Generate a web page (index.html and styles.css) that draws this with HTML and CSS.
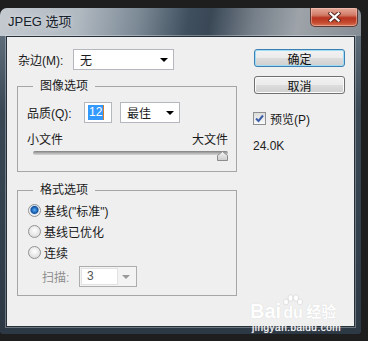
FILE: index.html
```html
<!DOCTYPE html>
<html lang="zh-CN">
<head>
    <meta charset="UTF-8">
    <title>JPEG 选项</title>
<link rel="stylesheet" href="styles.css">
</head>
<body>

    <div class="window">
        <div class="titlebar">
            <span class="title">JPEG 选项</span>
            <button class="close-btn" aria-label="关闭">
                <svg width="13" height="10" viewBox="0 0 13 10">
                    <path d="M2.5 1.5 L10.5 8.5 M10.5 1.5 L2.5 8.5" stroke="#5b2b22" stroke-width="4.2" stroke-linecap="square"/>
                    <path d="M2.5 1.5 L10.5 8.5 M10.5 1.5 L2.5 8.5" stroke="#ffffff" stroke-width="2.2" stroke-linecap="square"/>
                </svg>
            </button>
        </div>

        <div class="frame-body">
            <div class="client">

                <div class="left-col">
                    <div class="matte-row">
                        <label class="matte-label">杂边(M):</label>
                        <div class="select select-matte"><span>无</span><i class="arrow"></i></div>
                    </div>

                    <fieldset class="group group-image">
                        <legend>图像选项</legend>
                        <div class="quality-row">
                            <label class="quality-label">品质(Q):</label>
                            <div class="num-input"><span class="selected">12</span></div>
                            <div class="select select-quality"><span>最佳</span><i class="arrow"></i></div>
                        </div>
                        <div class="size-labels">
                            <span>小文件</span>
                            <span>大文件</span>
                        </div>
                        <div class="slider">
                            <div class="track"></div>
                            <svg class="thumb" width="11" height="10" viewBox="0 0 11 10">
                                <defs>
                                    <linearGradient id="thumbFill" x1="0" y1="0" x2="0" y2="1">
                                        <stop offset="0" stop-color="#f6f6f6"/>
                                        <stop offset="1" stop-color="#cbcbcb"/>
                                    </linearGradient>
                                </defs>
                                <path d="M0.5 9.5 L0.5 4.5 L5.5 0.5 L10.5 4.5 L10.5 9.5 Z" fill="url(#thumbFill)" stroke="#8c8c8c"/>
                            </svg>
                        </div>
                    </fieldset>

                    <fieldset class="group group-format">
                        <legend>格式选项</legend>
                        <div class="radio-row first">
                            <span class="radio checked"></span>
                            <span>基线("标准")</span>
                        </div>
                        <div class="radio-row">
                            <span class="radio"></span>
                            <span>基线已优化</span>
                        </div>
                        <div class="radio-row">
                            <span class="radio"></span>
                            <span>连续</span>
                        </div>
                        <div class="scan-row">
                            <label class="scan-label">扫描:</label>
                            <div class="select select-scan">
                                <div class="scan-edit">3</div>
                                <i class="arrow arrow-disabled"></i>
                            </div>
                        </div>
                    </fieldset>
                </div>

                <div class="right-col">
                    <button class="btn btn-default">确定</button>
                    <button class="btn btn-cancel">取消</button>
                    <div class="check-row">
                        <span class="checkbox">
                            <svg width="11" height="11" viewBox="0 0 11 11">
                                <path d="M2 5.5 L4.5 8 L9 2.5" fill="none" stroke="#3a5fa8" stroke-width="2"/>
                            </svg>
                        </span>
                        <span>预览(P)</span>
                    </div>
                    <div class="file-size">24.0K</div>
                </div>

            </div>
        </div>

        <!-- watermark from the screenshot source -->
        <div class="watermark">
            <div class="wm-top">
                <span class="wm-bai">Bai</span>
                <span class="wm-du">
                    <svg width="20" height="12" viewBox="0 0 20 12">
                        <ellipse cx="3" cy="8" rx="2.5" ry="3" fill="#fff" stroke="#dedede"/>
                        <ellipse cx="7.5" cy="4" rx="2.5" ry="3.3" fill="#fff" stroke="#dedede"/>
                        <ellipse cx="13" cy="4" rx="2.5" ry="3.3" fill="#fff" stroke="#dedede"/>
                        <ellipse cx="17" cy="8" rx="2.5" ry="3" fill="#fff" stroke="#dedede"/>
                    </svg>
                    <span class="wm-du-text">du</span>
                </span>
                <span class="wm-jy">经验</span>
            </div>
            <div class="wm-url">jingyan.baidu.com</div>
        </div>
    </div>

</body>
</html>
```

FILE: styles.css
```css
/* Reset */
* {
    padding: 0;
    margin: 0;
    box-sizing: border-box;
}

body {
    background-color: #1e1e1e;
    font-family: "Liberation Sans", "Noto Sans CJK SC", sans-serif;
    font-size: 12px;
    color: #1a1a1a;
}

/* Window frame */
.window {
    position: relative;
    width: 361px;
    height: 326px;
    margin-top: 8px;
    border-radius: 7px 7px 4px 4px;
    background-color: #34434f;
    display: flex;
    flex-direction: column;
    overflow: hidden;
}

.titlebar {
    height: 28px;
    display: flex;
    justify-content: space-between;
    align-items: flex-start;
    background: linear-gradient(100deg, #c4cad0 0%, #b0b8c0 22%, #7d8b97 38%, #3f4f5d 52%, #3a4856 58%, #76808a 70%, #9da3a9 82%, #868d94 100%);
}

.title {
    line-height: 28px;
    padding-left: 8px;
    font-size: 13px;
    color: #16202a;
    text-shadow: 0 0 6px rgba(255, 255, 255, 0.7);
}

.close-btn {
    width: 48px;
    height: 19px;
    margin-right: 3px;
    border: 1px solid #5e3a33;
    border-top: none;
    border-radius: 0 0 5px 5px;
    background: linear-gradient(#e6ab9b, #d17a66 40%, #b8331f 55%, #c4492f 80%, #d8765a);
    box-shadow: inset 0 0 0 1px rgba(255, 210, 200, 0.45);
    display: flex;
    align-items: center;
    justify-content: center;
}

.frame-body {
    flex: 1;
    display: flex;
    padding: 0 6px 7px 6px;
    background: linear-gradient(#5f6d7a, #3a4855 25%, #2c3945);
}

/* Client area */
.client {
    flex: 1;
    display: flex;
    padding: 12px 0 0 10px;
    background-color: #efefef;
    border: 1px solid #25303a;
    box-shadow: 0 0 0 1px rgba(255, 255, 255, 0.3);
}

.left-col {
    width: 220px;
}

.right-col {
    width: 91px;
    margin-left: 17px;
    display: flex;
    flex-direction: column;
}

/* Dropdowns */
.select {
    height: 21px;
    display: flex;
    align-items: center;
    justify-content: space-between;
    padding: 0 5px 0 6px;
    background-color: #fff;
    border: 1px solid #b4b7bd;
}

.arrow {
    width: 0;
    height: 0;
    border-left: 4px solid transparent;
    border-right: 4px solid transparent;
    border-top: 4px solid #000;
}

.arrow-disabled {
    border-top-color: #9a9a9a;
}

.matte-row {
    display: flex;
    align-items: center;
    height: 21px;
}

.matte-label {
    width: 56px;
    padding-left: 1px;
}

.select-matte {
    width: 101px;
}

/* Group boxes */
.group {
    width: 220px;
    border: 1px solid #a6a6a6;
    padding: 0 8px 10px 9px;
}

.group legend {
    margin-left: 6px;
    padding: 0 7px;
    line-height: 16px;
}

.group-image {
    margin-top: 8px;
}

.group-format {
    margin-top: 10px;
    padding-bottom: 8px;
}

.quality-row {
    display: flex;
    align-items: center;
    height: 21px;
    margin-top: 8px;
}

.quality-label {
    width: 57px;
}

.num-input {
    width: 28px;
    height: 21px;
    padding: 2px 0 0 3px;
    background-color: #fff;
    border: 1px solid #b4b7bd;
}

.num-input .selected {
    display: inline-block;
    height: 15px;
    line-height: 15px;
    padding: 0 1px;
    background-color: #3399ff;
    color: #fff;
    border-right: 1px solid #d08030;
}

.select-quality {
    width: 60px;
    margin-left: 8px;
}

.size-labels {
    display: flex;
    justify-content: space-between;
    margin-top: 9px;
    line-height: 16px;
}

.slider {
    position: relative;
    height: 10px;
    margin-left: 6px;
}

.track {
    height: 4px;
    margin-top: 3px;
    border-radius: 2px;
    background: linear-gradient(#7e7e7e, #b8b8b8 60%, #d4d4d4);
}

.thumb {
    position: absolute;
    right: 0;
    top: 0;
}

/* Radios */
.radio-row {
    display: flex;
    align-items: center;
    height: 21px;
}

.radio-row.first {
    margin-top: 2px;
}

.radio {
    width: 13px;
    height: 13px;
    margin: 0 3px 0 1px;
    border-radius: 50%;
    border: 1px solid #929292;
    background: radial-gradient(circle at 50% 40%, #ffffff, #e4e4e4 60%, #d2d2d2);
}

.radio.checked {
    background: radial-gradient(circle at 50% 45%, #5fb0f0 0, #1f6cc0 2.5px, #174f96 3.5px, #c9ddf1 4.5px, #f4f4f4 5px, #d8d8d8);
}

.scan-row {
    display: flex;
    align-items: center;
    margin-top: 3px;
    padding-left: 15px;
}

.scan-label {
    width: 37px;
    color: #8e8e8e;
}

.select-scan {
    width: 58px;
    padding: 1px 6px 1px 1px;
    background-color: #f3f3f3;
    border-color: #adadad;
}

.scan-edit {
    width: 37px;
    height: 17px;
    line-height: 15px;
    padding-left: 5px;
    background-color: #fff;
    border: 1px solid #e2e2e2;
    color: #555;
}

/* Buttons */
.btn {
    height: 18px;
    width: 91px;
    font-family: inherit;
    font-size: 12px;
    color: #111;
    border: 1px solid #707070;
    border-radius: 3px;
    background: linear-gradient(#f2f2f2, #ebebeb 50%, #dddddd 51%, #cfcfcf);
    box-shadow: inset 0 0 0 1px #fbfbfb;
}

.btn-default {
    border-color: #3c7fb1;
    box-shadow: inset 0 0 0 1px #9fdcf8;
}

.btn-cancel {
    margin-top: 9px;
}

.check-row {
    display: flex;
    align-items: center;
    height: 16px;
    margin: 16px 0 0 -1px;
}

.checkbox {
    width: 13px;
    height: 13px;
    margin-right: 4px;
    border: 1px solid #8e8f8f;
    background: linear-gradient(#dcdcdc, #fafafa);
    display: flex;
    align-items: center;
    justify-content: center;
}

.file-size {
    margin: 12px 0 0 -1px;
    line-height: 16px;
    color: #222;
}

/* Watermark */
.watermark {
    position: absolute;
    left: 250px;
    top: 286px;
    color: #fff;
    text-shadow: 0 0 1px #cfcfcf;
}

.wm-top {
    display: flex;
    align-items: flex-end;
}

.wm-bai {
    font-size: 20px;
    font-weight: bold;
    line-height: 22px;
}

.wm-du {
    display: flex;
    flex-direction: column;
    align-items: center;
    margin-left: 2px;
}

.wm-du-text {
    font-size: 16px;
    font-weight: bold;
    line-height: 14px;
    margin-bottom: 2px;
}

.wm-jy {
    font-size: 15px;
    font-weight: bold;
    line-height: 20px;
    margin-left: 3px;
}

.wm-url {
    font-size: 10px;
    line-height: 12px;
    margin-left: 2px;
    letter-spacing: 0.5px;
    color: #fafafa;
}
```
